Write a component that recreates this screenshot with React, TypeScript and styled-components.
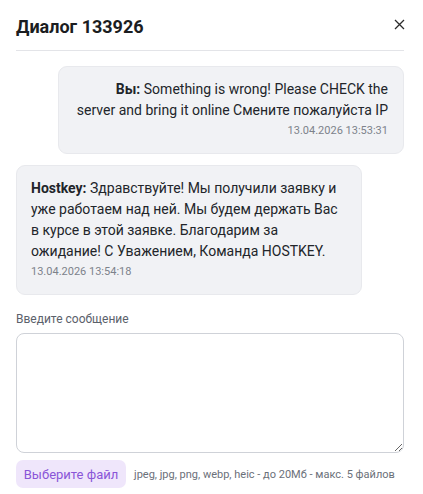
import React from "react";
import styled, { createGlobalStyle } from "styled-components";

const Global = createGlobalStyle`
  html, body { margin: 0; padding: 0; background: #fff; }
  body { font-family: Roboto, "Noto Sans", Arial, sans-serif; color: #1f2329; }
  * { box-sizing: border-box; }
`;

const Dialog = styled.div`
  width: 423px;
  padding: 0 19px 0 16px;
  display: flex;
  flex-direction: column;
`;

const Header = styled.div`
  display: flex;
  justify-content: space-between;
  align-items: flex-start;
  padding-top: 14px;
  padding-bottom: 10px;
  border-bottom: 1px solid #e3e4e8;
`;

const Title = styled.h2`
  margin: 0;
  font-size: 18px;
  line-height: 26px;
  font-weight: 700;
  color: #1b1d21;
`;

const Close = styled.button`
  border: 0;
  background: transparent;
  padding: 0;
  margin: 3px -2px 0 0;
  width: 14px;
  height: 14px;
  display: flex;
  align-items: center;
  justify-content: center;
  cursor: pointer;
  color: #333;
`;

const Messages = styled.div`
  display: flex;
  flex-direction: column;
  gap: 11px;
  padding-top: 15px;
`;

const Bubble = styled.div<{ $mine?: boolean }>`
  align-self: ${(p) => (p.$mine ? "flex-end" : "flex-start")};
  max-width: 346px;
  background: #f1f2f5;
  border: 1px solid #e8e9ed;
  border-radius: 9px;
  padding: 12px 15px 14px ${(p) => (p.$mine ? "16px" : "14px")};
  text-align: ${(p) => (p.$mine ? "right" : "left")};
`;

const Text = styled.div`
  font-size: 14px;
  line-height: 21px;
  color: #22252a;
`;

const Author = styled.b`
  font-weight: 700;
`;

const Time = styled.div`
  font-size: 11px;
  line-height: 16px;
  margin-top: 2px;
  color: #7d828b;
`;

const Form = styled.div`
  display: flex;
  flex-direction: column;
  padding-top: 16px;
`;

const Label = styled.label`
  font-size: 12px;
  line-height: 16px;
  color: #5b616b;
  margin-bottom: 6px;
`;

const Area = styled.textarea`
  width: 100%;
  height: 120px;
  border: 1px solid #cfd2d8;
  border-radius: 8px;
  resize: vertical;
  font-family: inherit;
  font-size: 14px;
  padding: 8px 10px;
  outline: none;
`;

const FileRow = styled.div`
  display: flex;
  align-items: center;
  gap: 8px;
  margin-top: 7px;
`;

const FileButton = styled.button`
  border: 0;
  background: #efe6fb;
  color: #8a55d8;
  border-radius: 7px;
  height: 28px;
  width: 110px;
  font-family: inherit;
  font-size: 13px;
  padding: 0;
  cursor: pointer;
`;

const Hint = styled.span`
  font-size: 11px;
  color: #6b7079;
  white-space: nowrap;
`;

export default function App() {
  return (
    <>
      <Global />
      <Dialog>
        <Header>
          <Title>Диалог 133926</Title>
          <Close aria-label="Закрыть">
            <svg width="11" height="11" viewBox="0 0 11 11">
              <path d="M1 1L10 10M10 1L1 10" stroke="#2b2b2b" strokeWidth="1.3" />
            </svg>
          </Close>
        </Header>
        <Messages>
          <Bubble $mine>
            <Text>
              <Author>Вы:</Author> Something is wrong! Please CHECK the server and bring it online Смените пожалуйста IP
            </Text>
            <Time>13.04.2026 13:53:31</Time>
          </Bubble>
          <Bubble>
            <Text>
              <Author>Hostkey:</Author> Здравствуйте! Мы получили заявку и уже работаем над ней. Мы будем держать Вас в курсе в этой заявке. Благодарим за ожидание! С Уважением, Команда HOSTKEY.
            </Text>
            <Time>13.04.2026 13:54:18</Time>
          </Bubble>
        </Messages>
        <Form>
          <Label>Введите сообщение</Label>
          <Area />
          <FileRow>
            <FileButton>Выберите файл</FileButton>
            <Hint>jpeg, jpg, png, webp, heic - до 20Мб - макс. 5 файлов</Hint>
          </FileRow>
        </Form>
      </Dialog>
    </>
  );
}
